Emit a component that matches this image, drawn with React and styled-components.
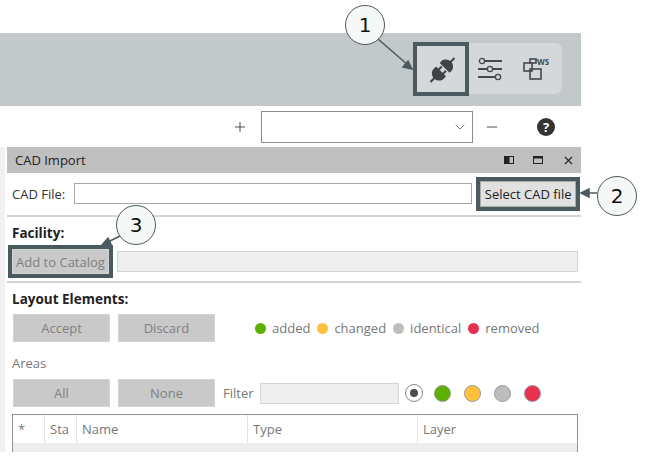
import styled, { createGlobalStyle } from 'styled-components';
import { ChevronDown, Plus, Minus, X } from 'lucide-react';

const GlobalStyle = createGlobalStyle`
  html, body {
    margin: 0;
    padding: 0;
    background: #fff;
  }
`;

const Page = styled.div`
  position: relative;
  width: 650px;
  height: 462px;
  overflow: hidden;
  background: #fff;
  font-family: "Open Sans", "Noto Sans", sans-serif;
  font-size: 13px;
  color: #333;
`;

const Main = styled.div`
  width: 581px;
  padding-top: 33px;
  display: flex;
  flex-direction: column;
`;

// top grey toolbar
const Toolbar = styled.div`
  height: 73px;
  background: #c3c8ca;
  display: flex;
  justify-content: flex-end;
  align-items: flex-start;
  padding: 10px 19px 0 0;
  box-sizing: border-box;
`;

const IconGroup = styled.div`
  width: 147px;
  height: 51px;
  background: #d5d8da;
  border-radius: 7px;
  display: flex;
  align-items: center;
`;

const ToolButton = styled.div`
  width: ${(p) => p.$w}px;
  height: ${(p) => (p.$active ? 54 : 51)}px;
  margin-left: ${(p) => (p.$active ? -2 : 0)}px;
  box-sizing: border-box;
  flex: none;
  display: flex;
  align-items: center;
  justify-content: center;
  border: ${(p) => (p.$active ? '4px solid #4a5a5e' : 'none')};
`;

const ZoomRow = styled.div`
  height: 41px;
  display: flex;
  align-items: center;
  color: #333;
`;

const RoundIcon = styled.div`
  width: 18px;
  height: 18px;
  border-radius: 50%;
  background: #333;
  color: #fff;
  font-size: 13px;
  font-weight: 700;
  display: flex;
  align-items: center;
  justify-content: center;
  margin-left: 37px;
`;

const Combo = styled.div`
  width: 212px;
  height: 32px;
  box-sizing: border-box;
  border: 1px solid #8c8c8c;
  display: flex;
  align-items: center;
  justify-content: flex-end;
  padding-right: 4px;
  margin: 0 11px 0 13px;
  color: #666;
`;

const Panel = styled.div`
  border-left: 5px solid #f1f1f1;
  padding-left: 2px;
  display: flex;
  flex-direction: column;
`;

const TitleBar = styled.div`
  height: 26px;
  background: #bfbfbf;
  display: flex;
  align-items: center;
  justify-content: space-between;
  padding: 0 6px 0 8px;
  color: #222;
`;

const WindowButtons = styled.div`
  display: flex;
  align-items: center;
  gap: 19px;
`;

const FileRow = styled.div`
  height: 44px;
  display: flex;
  align-items: center;
  padding: 0 5px 1px 5px;
  border-bottom: 2px solid #d4d4d4;
  box-sizing: border-box;
`;

const Label = styled.span`
  color: ${(p) => p.$color || '#333'};
  margin-right: ${(p) => p.$mr || 0}px;
  white-space: nowrap;
`;

const TextInput = styled.div`
  width: ${(p) => p.$w}px;
  height: ${(p) => p.$h || 21}px;
  box-sizing: border-box;
  border: ${(p) => (p.$disabled ? '1px solid #d4d4d4' : '1px solid #a6a6a6')};
  background: ${(p) => (p.$disabled ? '#efefef' : '#fff')};
  flex: none;
`;

const Button = styled.div`
  width: ${(p) => p.$w || 97}px;
  height: ${(p) => p.$h || 28}px;
  box-sizing: border-box;
  flex: none;
  background: ${(p) => (p.$light ? '#e1e1e1' : '#c9c9c9')};
  border: 1px solid ${(p) => (p.$light ? '#adadad' : '#d4d4d4')};
  color: ${(p) => (p.$light ? '#222' : '#808080')};
  display: flex;
  align-items: center;
  justify-content: center;
  white-space: nowrap;
`;

const Highlight = styled.div`
  border: 4px solid #4a5a5e;
  flex: none;
  display: flex;
`;

const Section = styled.div`
  display: flex;
  flex-direction: column;
  padding: ${(p) => p.$pad || '0 5px'};
  border-bottom: ${(p) => (p.$line ? '2px solid #d4d4d4' : 'none')};
`;

const Heading = styled.div`
  font-weight: 700;
  font-size: 13.5px;
  color: #222;
  line-height: 16px;
`;

const Row = styled.div`
  display: flex;
  align-items: center;
  gap: ${(p) => p.$gap || 8}px;
  margin-top: ${(p) => p.$mt || 0}px;
  padding-left: ${(p) => p.$pl || 0}px;
`;

const LegendItem = styled.span`
  display: flex;
  align-items: center;
  gap: 6px;
  color: #777;
`;

const LegendDot = styled.span`
  width: 11px;
  height: 11px;
  border-radius: 50%;
  background: ${(p) => p.$color};
`;

const FilterDot = styled.span`
  width: 17px;
  height: 17px;
  box-sizing: border-box;
  border-radius: 50%;
  background: ${(p) => p.$color};
  border: 1px solid #999;
  flex: none;
  margin-left: 5px;
`;

const RadioOuter = styled.span`
  width: 18px;
  height: 18px;
  box-sizing: border-box;
  border-radius: 50%;
  background: #fff;
  border: 1px solid #888;
  flex: none;
  margin: 0 -2px;
  display: flex;
  align-items: center;
  justify-content: center;
  &::after {
    content: '';
    width: 8px;
    height: 8px;
    border-radius: 50%;
    background: #4d4d4d;
  }
`;

const Table = styled.div`
  width: 566px;
  height: 38px;
  margin: 7px 0 0 0;
  box-sizing: border-box;
  border: 1px solid #8a949c;
  border-bottom: none;
  display: flex;
  flex-direction: column;
`;

const HeaderRow = styled.div`
  height: 28px;
  display: flex;
  flex: none;
`;

const HeaderCell = styled.div`
  width: ${(p) => p.$w}px;
  box-sizing: border-box;
  flex: none;
  padding-left: 5px;
  display: flex;
  align-items: center;
  border-right: ${(p) => (p.$last ? 'none' : '1px solid #e3e3e3')};
  color: #777;
  overflow: hidden;
  white-space: nowrap;
`;

const TableBody = styled.div`
  flex: 1;
  background: #eeeeee;
`;

// numbered callouts lie over the screen
const Callout = styled.div`
  position: absolute;
  left: ${(p) => p.$x - 20}px;
  top: ${(p) => p.$y - 20}px;
  width: 40px;
  height: 40px;
  box-sizing: border-box;
  border-radius: 50%;
  border: 1.5px solid #4a5a5e;
  background: #f6f8f8;
  display: flex;
  align-items: center;
  justify-content: center;
  font-family: "DejaVu Sans", sans-serif;
  font-size: 20px;
  color: #111;
`;

const Arrows = styled.svg`
  position: absolute;
  left: 0;
  top: 0;
  pointer-events: none;
`;

const PlugIcon = () => (
  <svg width="30" height="30" viewBox="0 0 30 30" fill="#3f4345">
    <g transform="translate(1.500 1) rotate(45 15 15)">
      <rect x="14" y="-2" width="2" height="6" />
      <path d="M8 12h14V9c0-3-3.500-6-7-6S8 6 8 9z" />
      <rect x="11" y="13" width="2" height="5" />
      <rect x="17" y="13" width="2" height="5" />
      <path d="M8 17h14v4c0 3-3.500 6-7 6s-7-3-7-6z" />
      <rect x="14" y="26" width="2" height="6" />
    </g>
  </svg>
);

const SlidersIcon = () => (
  <svg width="24" height="24" viewBox="0 0 24 24" fill="none" stroke="#44484a" strokeWidth="2">
    <path d="M6 4h18M0 12h9M14 12h10M0 20h18" />
    <circle cx="4" cy="4" r="2.600" fill="#d5d8da" strokeWidth="1.300" />
    <circle cx="12" cy="12" r="2.600" fill="#d5d8da" strokeWidth="1.300" />
    <circle cx="20" cy="20" r="2.600" fill="#d5d8da" strokeWidth="1.300" />
  </svg>
);

const WorkspaceIcon = () => (
  <svg width="26" height="24" viewBox="0 0 26 24" fill="none" stroke="#44484a" strokeWidth="1.600">
    <rect x="1" y="6" width="8" height="8" />
    <rect x="7" y="2" width="6" height="4" />
    <rect x="7" y="12" width="11" height="10" />
    <text x="14" y="7.500" fontFamily="Open Sans, sans-serif" fontSize="8" fontWeight="700" fill="#44484a" stroke="none">WS</text>
  </svg>
);

const DockIcon = () => (
  <svg width="10" height="8" viewBox="0 0 10 8">
    <rect x="0.500" y="0.500" width="9" height="7" fill="#bfbfbf" stroke="#222" />
    <rect x="0" y="0" width="5.500" height="8" fill="#222" />
  </svg>
);

const MaxIcon = () => (
  <svg width="10" height="8" viewBox="0 0 10 8" fill="none" stroke="#222">
    <rect x="0.500" y="0.500" width="9" height="7" />
    <path d="M0 1.500h10" strokeWidth="2" />
  </svg>
);

const App = () => {
  return (
    <Page>
      <GlobalStyle />
      <Main>
        <Toolbar>
          <IconGroup>
            <ToolButton $active $w={56}><PlugIcon /></ToolButton>
            <ToolButton $w={41}><SlidersIcon /></ToolButton>
            <ToolButton $w={52}><WorkspaceIcon /></ToolButton>
          </IconGroup>
        </Toolbar>

        <ZoomRow>
          <Plus size={16} strokeWidth={1.3} style={{ marginLeft: 232 }} />
          <Combo><ChevronDown size={16} strokeWidth={1.3} /></Combo>
          <Minus size={16} strokeWidth={1.3} />
          <RoundIcon>?</RoundIcon>
        </ZoomRow>

        <Panel>
          <TitleBar>
            CAD Import
            <WindowButtons>
              <DockIcon />
              <MaxIcon />
              <X size={13} strokeWidth={2} color="#222" />
            </WindowButtons>
          </TitleBar>

          <FileRow>
            <Label $mr={9}>CAD File:</Label>
            <TextInput $w={398} />
            <Highlight style={{ marginLeft: 4 }}>
              <Button $light $w={96} $h={26}>Select CAD file</Button>
            </Highlight>
          </FileRow>

          <Section $line $pad="8px 3px 3px 5px">
            <Heading>Facility:</Heading>
            <Row $gap={4} $mt={4}>
              <Highlight style={{ marginLeft: -4 }}>
                <Button $w={97} $h={25}>Add to Catalog</Button>
              </Highlight>
              <TextInput $disabled $w={461} />
            </Row>
          </Section>

          <Section $pad="8px 5px 0 5px">
            <Heading>Layout Elements:</Heading>
            <Row $mt={7}>
              <Button style={{ marginLeft: 1 }}>Accept</Button>
              <Button>Discard</Button>
              <Row $gap={7} $pl={32}>
                <LegendItem><LegendDot $color="#5eb000" />added</LegendItem>
                <LegendItem><LegendDot $color="#ffc13b" />changed</LegendItem>
                <LegendItem><LegendDot $color="#bdbdbd" />identical</LegendItem>
                <LegendItem><LegendDot $color="#e8304f" />removed</LegendItem>
              </Row>
            </Row>
            <Label $color="#777" style={{ marginTop: 13, lineHeight: '16px' }}>Areas</Label>
            <Row $mt={8}>
              <Button style={{ marginLeft: 1 }}>All</Button>
              <Button>None</Button>
              <Label $color="#777" $mr={-2}>Filter</Label>
              <TextInput $disabled $w={139} />
              <RadioOuter />
              <FilterDot $color="#5eb000" />
              <FilterDot $color="#ffc13b" />
              <FilterDot $color="#bdbdbd" />
              <FilterDot $color="#e8304f" />
            </Row>
            <Table>
              <HeaderRow>
                <HeaderCell $w={32}>*</HeaderCell>
                <HeaderCell $w={32}>Sta</HeaderCell>
                <HeaderCell $w={171}>Name</HeaderCell>
                <HeaderCell $w={170}>Type</HeaderCell>
                <HeaderCell $w={159} $last>Layer</HeaderCell>
              </HeaderRow>
              <TableBody />
            </Table>
          </Section>
        </Panel>
      </Main>

      <Arrows width="650" height="462" viewBox="0 0 650 462" fill="#4a5a5e" stroke="#4a5a5e" strokeWidth="1.500">
        <path d="M378 39L408 65" />
        <path d="M412 69l-9-2 5-6z" />
        <path d="M597 193H586" />
        <path d="M581 193l8-4v8z" />
        <path d="M120 236L108 242" />
        <path d="M102 245l6-7 3 6z" />
      </Arrows>
      <Callout $x={365} $y={25}>1</Callout>
      <Callout $x={617} $y={196}>2</Callout>
      <Callout $x={136} $y={225}>3</Callout>
    </Page>
  );
};

export default App;
